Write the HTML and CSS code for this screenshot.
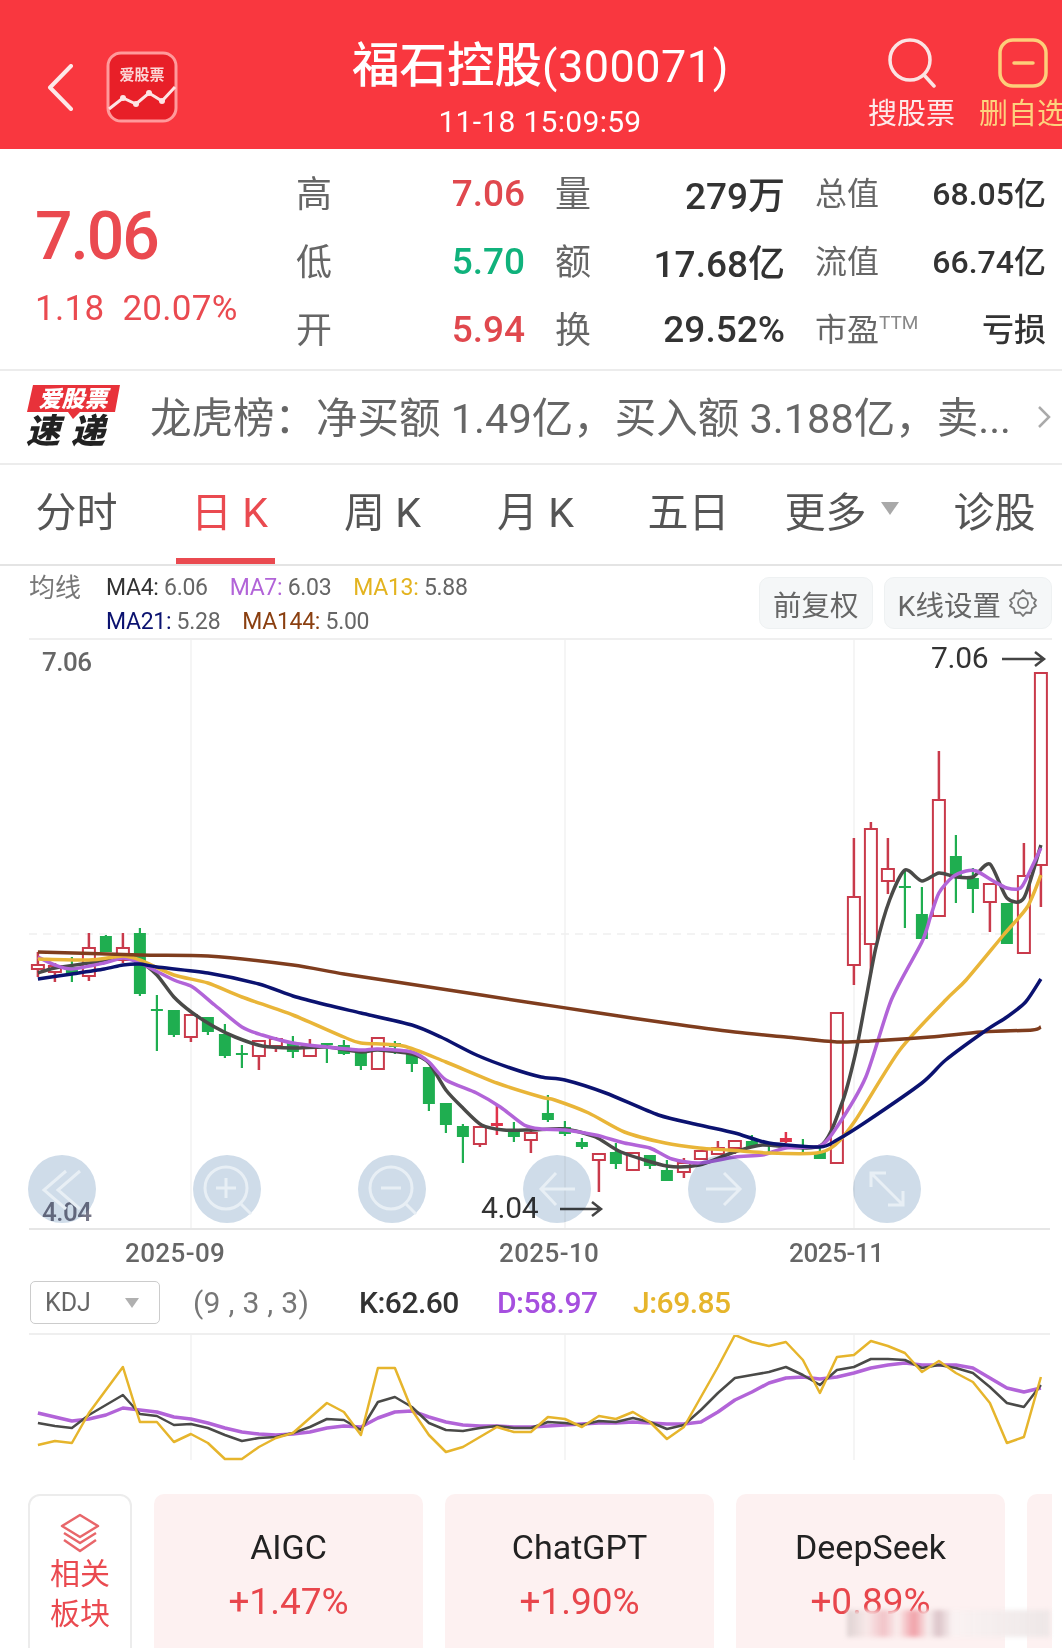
FILE: index.html
```html
<!DOCTYPE html>
<html lang="zh-CN">
<head>
  <meta charset="UTF-8">
  <meta name="viewport" content="width=device-width, initial-scale=1.0">
  <title>福石控股(300071)</title>
  <link rel="stylesheet" href="styles.css">
</head>
<body>
  <div class="page">

    <header class="header">
      <div class="headerLeft">
        <svg class="backIcon" width="27" height="47" viewBox="0 0 27 47"><path d="M24 2 L3 23.5 L24 45" /></svg>
        <svg class="appLogo" width="72" height="72" viewBox="0 0 72 72">
          <rect x="2" y="2" width="68" height="68" rx="13" class="appLogoBox" />
          <text x="36" y="29" class="appLogoText">爱股票</text>
          <polyline class="appLogoLine" points="3,58 17,47 30,53 43,42 56,50 69,36" />
          <circle cx="17" cy="47" r="3" /><circle cx="30" cy="53" r="3" /><circle cx="43" cy="42" r="3" /><circle cx="56" cy="50" r="3" />
        </svg>
      </div>
      <div class="headerTitle">
        <p class="stockName">福石控股<span class="stockCode">(300071)</span></p>
        <p class="stockTime">11-18 15:09:59</p>
      </div>
      <div class="headerActions">
        <div class="action">
          <svg width="52" height="50" viewBox="0 0 52 50"><circle cx="24" cy="22" r="20" class="searchStroke" /><path d="M38 37 L48 48" class="searchStroke" /></svg>
          <span>搜股票</span>
        </div>
        <div class="action actionGold">
          <svg width="52" height="50" viewBox="0 0 52 50"><rect x="3" y="2" width="46" height="46" rx="13" class="goldStroke" /><path d="M17 25 H36" class="goldStroke" /></svg>
          <span>删自选</span>
        </div>
      </div>
    </header>

    <section class="quote">
      <div class="quoteMain">
        <p class="lastPrice">7.06</p>
        <p class="change">1.18&nbsp; 20.07%</p>
      </div>
      <div class="quoteGrid">
        <span class="qLabel">高</span><span class="qValue up">7.06</span>
        <span class="qLabel">量</span><span class="qValue">279万</span>
        <span class="qSmall">总值</span><span class="qRight">68.05亿</span>

        <span class="qLabel">低</span><span class="qValue down">5.70</span>
        <span class="qLabel">额</span><span class="qValue">17.68亿</span>
        <span class="qSmall">流值</span><span class="qRight">66.74亿</span>

        <span class="qLabel">开</span><span class="qValue up">5.94</span>
        <span class="qLabel">换</span><span class="qValue">29.52%</span>
        <span class="qSmall">市盈<sup class="ttm">TTM</sup></span><span class="qRight">亏损</span>
      </div>
    </section>

    <section class="notice">
      <svg class="noticeLogo" width="96" height="68" viewBox="0 0 96 68">
        <path class="noticeFlag" d="M7 2 H94 L89 29 H54 L47 36 L42 29 H1 Z" />
        <text x="47" y="24" class="noticeFlagText">爱股票</text>
        <text x="0" y="60" class="noticeSpeed">速</text>
        <text x="45" y="60" class="noticeSpeed">递</text>
      </svg>
      <p class="noticeText">龙虎榜：净买额 1.49亿，买入额 3.188亿，卖...</p>
      <svg class="noticeArrow" width="14" height="24" viewBox="0 0 14 24"><path d="M2 2 L12 12 L2 22" /></svg>
    </section>

    <nav class="tabs">
      <div class="tab">分时</div>
      <div class="tab tabActive">日 K</div>
      <div class="tab">周 K</div>
      <div class="tab">月 K</div>
      <div class="tab">五日</div>
      <div class="tab">更多<span class="tabCaret"></span></div>
      <div class="tab">诊股</div>
    </nav>

    <section class="legend">
      <span class="legendTitle">均线</span>
      <div class="legendLines">
        <div class="legendLine">
          <span><b class="cMa4">MA4:</b> 6.06</span>
          <span><b class="cMa7">MA7:</b> 6.03</span>
          <span><b class="cMa13">MA13:</b> 5.88</span>
        </div>
        <div class="legendLine">
          <span><b class="cMa21">MA21:</b> 5.28</span>
          <span><b class="cMa144">MA144:</b> 5.00</span>
        </div>
      </div>
      <div class="legendButtons">
        <div class="chip">前复权</div>
        <div class="chip">K线设置
          <svg width="30" height="30" viewBox="0 0 30 30"><path class="gear" d="M15 2 L18 5.5 L23 5 L24 9.5 L28 12 L26 15 L28 18 L24 20.5 L23 25 L18 24.5 L15 28 L12 24.5 L7 25 L6 20.5 L2 18 L4 15 L2 12 L6 9.5 L7 5 L12 5.5 Z" /><circle class="gear" cx="15" cy="15" r="5" /></svg>
        </div>
      </div>
    </section>

    <section class="chartWrap">
      <svg id="kline" class="chart" width="1062" height="630" viewBox="0 640 1062 630">
        <line class="gridV" x1="191" y1="640" x2="191" y2="1229" />
        <line class="gridV" x1="565" y1="640" x2="565" y2="1229" />
        <line class="gridV" x1="854" y1="640" x2="854" y2="1229" />
        <line class="gridDash" x1="29" y1="934" x2="1050" y2="934" />
        <line class="axis" x1="29" y1="1229" x2="1050" y2="1229" />
        <g id="candles"></g>
        <g id="maLines"></g>
        <text x="42" y="671" class="scaleText">7.06</text>
        <text x="42" y="1221" class="scaleText scaleLow">4.04</text>
        <text x="931" y="668" class="markText">7.06</text>
        <path class="markArrow" d="M1002 659 H1044 M1035 652 L1044 659 L1035 666" />
        <text x="481" y="1218" class="markText">4.04</text>
        <path class="markArrow" d="M560 1209 H601 M592 1202 L601 1209 L592 1216" />
        <text x="125" y="1262" class="dateText">2025-09</text>
        <text x="499" y="1262" class="dateText">2025-10</text>
        <text x="789" y="1262" class="dateText dateTight">2025-11</text>
      </svg>
      <div class="chartTools">
        <div class="toolBtn"><svg width="68" height="68" viewBox="0 0 68 68"><path d="M38 16 L16 35 L38 54 M52 16 L30 35 L52 54" /></svg></div>
        <div class="toolBtn"><svg width="68" height="68" viewBox="0 0 68 68"><circle cx="33" cy="33" r="21" /><path d="M33 23 V43 M23 33 H43 M48 49 L58 59" /></svg></div>
        <div class="toolBtn"><svg width="68" height="68" viewBox="0 0 68 68"><circle cx="33" cy="33" r="21" /><path d="M23 33 H43 M48 49 L58 59" /></svg></div>
        <div class="toolBtn"><svg width="68" height="68" viewBox="0 0 68 68"><path d="M52 34 H18 M33 18 L18 34 L33 50" /></svg></div>
        <div class="toolBtn"><svg width="68" height="68" viewBox="0 0 68 68"><path d="M18 34 H52 M36 18 L52 34 L36 50" /></svg></div>
        <div class="toolBtn"><svg width="68" height="68" viewBox="0 0 68 68"><path d="M18 32 V18 H33 M18 18 L50 50 M50 36 V50 H35" /></svg></div>
      </div>
    </section>

    <section class="kdjBar">
      <div class="kdjSelect">KDJ<span class="kdjCaret"></span></div>
      <span class="kdjParams">(9 , 3 , 3)</span>
      <span class="kdjK">K:62.60</span>
      <span class="kdjD">D:58.97</span>
      <span class="kdjJ">J:69.85</span>
    </section>

    <section class="kdjChart">
      <svg id="kdj" class="chart" width="1062" height="159" viewBox="0 1335 1062 159">
        <line class="gridV" x1="191" y1="1335" x2="191" y2="1460" />
        <line class="gridV" x1="565" y1="1335" x2="565" y2="1460" />
        <line class="gridV" x1="854" y1="1335" x2="854" y2="1460" />
      </svg>
    </section>

    <section class="plates">
      <div class="plateHead">
        <svg width="42" height="40" viewBox="0 0 42 40">
          <path class="plateIcon" d="M21 2 L39 13 L21 24 L3 13 Z M5 20 L21 30 L37 20 M5 27 L21 38 L37 27" />
        </svg>
        <span>相关</span>
        <span>板块</span>
      </div>
      <div class="plate"><p class="plateName">AIGC</p><p class="plateRate">+1.47%</p></div>
      <div class="plate"><p class="plateName">ChatGPT</p><p class="plateRate">+1.90%</p></div>
      <div class="plate"><p class="plateName">DeepSeek</p><p class="plateRate">+0.89%</p></div>
      <div class="plate"></div>
    </section>

    <div class="watermark"></div>
  </div>

  <script src="chart.js"></script>
</body>
</html>
```

FILE: styles.css
```css
body, html {
  margin: 0;
  background-color: white;
}
p {
  margin: 0;
}
.page {
  position: relative;
  width: 1062px;
  height: 1648px;
  overflow: hidden;
  font-family: Roboto, "Noto Sans CJK SC", sans-serif;
  color: #333;
}

/* red header */
.header {
  display: grid;
  grid-template-columns: 352px 376px 1fr;
  height: 149px;
  background-color: #f9373f;
  color: white;
}
.headerLeft {
  display: flex;
  align-items: center;
  gap: 32px;
  padding: 0 0 0 47px;
  height: 174px;
}
.backIcon path {
  fill: none;
  stroke: #fde8e8;
  stroke-width: 4;
  stroke-linecap: round;
  stroke-linejoin: round;
}
.appLogoBox {
  fill: #e81f28;
  stroke: #ff9a9b;
  stroke-width: 3;
}
.appLogoText {
  font-size: 15px;
  font-weight: 700;
  fill: #fbd5d5;
  text-anchor: middle;
}
.appLogoLine {
  fill: none;
  stroke: #fde4e4;
  stroke-width: 3;
}
.appLogo circle {
  fill: #fde4e4;
}
.headerTitle {
  text-align: center;
  white-space: nowrap;
}
.stockName {
  margin-top: 38px;
  font-size: 47.5px;
  line-height: 56px;
  font-weight: 500;
}
.stockCode {
  font-size: 45px;
  letter-spacing: 0.5px;
  font-weight: 400;
}
.stockTime {
  margin-top: 9px;
  font-size: 30px;
  line-height: 36px;
  letter-spacing: 0.3px;
}
.headerActions {
  display: flex;
  gap: 24px;
  padding: 38px 0 0 140px;
}
.action {
  display: flex;
  flex-direction: column;
  align-items: center;
  width: 87px;
  flex-shrink: 0;
  white-space: nowrap;
  font-size: 29px;
  line-height: 36px;
  color: #fdeaea;
}
.action svg {
  margin-bottom: 8px;
}
.actionGold {
  color: #fdd27e;
}
.searchStroke {
  fill: none;
  stroke: #fbe3e3;
  stroke-width: 3.5;
  stroke-linecap: round;
}
.goldStroke {
  fill: none;
  stroke: #fdce7a;
  stroke-width: 3.5;
  stroke-linecap: round;
}

/* price block */
.quote {
  display: flex;
  height: 222px;
  border-bottom: 2px solid #ececec;
  box-sizing: border-box;
}
.quoteMain {
  width: 298px;
  padding: 51px 0 0 35px;
  box-sizing: border-box;
  color: #ea4a50;
  white-space: nowrap;
}
.lastPrice {
  font-size: 66px;
  line-height: 74px;
  font-weight: 500;
  letter-spacing: -2px;
}
.change {
  margin-top: 15px;
  font-size: 35px;
  line-height: 40px;
  letter-spacing: 0.3px;
}
.quoteGrid {
  display: grid;
  grid-template-columns: 34px 161px 36px 160px 60px 137px;
  grid-auto-rows: 68px;
  column-gap: 32px;
  align-items: center;
  padding-top: 10px;
  white-space: nowrap;
}
.qLabel {
  margin: 0 0 4px -2px;
  font-size: 36px;
  color: #666;
}
.qValue {
  font-size: 37px;
  text-align: right;
  font-weight: 500;
}
.qSmall {
  margin: 0 0 5px -2px;
  font-size: 32px;
  color: #666;
}
.qRight {
  margin-bottom: 4px;
  font-size: 32px;
  text-align: right;
  font-weight: 500;
}
.ttm {
  font-size: 19px;
  color: #888;
  vertical-align: 12px;
  line-height: 0;
}
.up {
  color: #e0484e;
}
.down {
  color: #10b27c;
}

/* notice */
.notice {
  display: flex;
  align-items: center;
  height: 94px;
  padding-left: 26px;
  border-bottom: 2px solid #ececec;
  box-sizing: border-box;
}
.noticeFlag {
  fill: #e8323a;
}
.noticeFlagText {
  font-size: 23px;
  font-weight: 900;
  font-style: italic;
  fill: white;
  text-anchor: middle;
}
.noticeSpeed {
  font-size: 34px;
  font-weight: 900;
  font-style: italic;
  fill: #222;
}
.noticeText {
  flex-shrink: 0;
  margin: 4px 0 0 28px;
  width: 887px;
  font-size: 41.5px;
  line-height: 56px;
  color: #666;
  white-space: nowrap;
}
.noticeArrow path {
  fill: none;
  stroke: #aaa;
  stroke-width: 2.5;
}

/* period tabs */
.tabs {
  display: grid;
  grid-template-columns: repeat(7, 153px);
  height: 101px;
  border-bottom: 2px solid #e4e4e4;
  box-sizing: border-box;
  font-size: 41px;
  color: #555;
}
.tab {
  display: flex;
  align-items: center;
  justify-content: center;
  padding-bottom: 12px;
  white-space: pre;
}
.tabActive {
  color: #ea4a50;
  position: relative;
}
.tabActive::after {
  content: "";
  position: absolute;
  left: 23px;
  bottom: 0;
  width: 99px;
  height: 6px;
  background-color: #ea4a50;
}
.tabCaret {
  margin-left: 14px;
  border-left: 9px solid transparent;
  border-right: 9px solid transparent;
  border-top: 13px solid #a9a9a9;
}

/* MA legend */
.legend {
  display: flex;
  height: 74px;
  margin: 0 10px 0 29px;
  border-bottom: 2px solid #efefef;
  box-sizing: border-box;
  color: #666;
  font-size: 23px;
}
.legendTitle {
  width: 77px;
  padding-top: 5px;
  font-size: 26px;
  line-height: 34px;
  color: #777;
}
.legendLines {
  flex: 1;
  padding-top: 5px;
}
.legendLine {
  display: flex;
  gap: 22px;
  height: 34px;
  line-height: 34px;
  letter-spacing: -0.3px;
}
.legendLine b {
  font-weight: 400;
}
.cMa4 { color: #333; }
.cMa7 { color: #b264d8; }
.cMa13 { color: #e3b31f; }
.cMa21 { color: #0b1270; }
.cMa144 { color: #8a3f10; }
.legendButtons {
  display: flex;
  gap: 11px;
  padding-top: 11px;
}
.chip {
  display: flex;
  align-items: center;
  gap: 7px;
  height: 50px;
  padding: 0 13px;
  border: 1px solid #eef1f2;
  border-radius: 10px;
  background-color: #f5f7f8;
  font-size: 28.5px;
  color: #666;
}
.gear {
  fill: none;
  stroke: #777;
  stroke-width: 1.8;
  stroke-linejoin: round;
}

/* charts */
.chartWrap {
  position: relative;
  height: 630px;
}
.chart {
  display: block;
}
.gridV {
  stroke: #f2f2f2;
  stroke-width: 1.5;
}
.gridDash {
  stroke: #efefef;
  stroke-width: 1.5;
  stroke-dasharray: 8 6;
}
.axis {
  stroke: #e6e6e6;
  stroke-width: 2;
}
.scaleText {
  font-size: 26px;
  font-weight: 500;
  fill: #666;
  letter-spacing: -0.5px;
}
.scaleLow {
  fill: #778;
}
.markText {
  font-size: 30px;
  fill: #333;
  letter-spacing: -0.3px;
}
.markArrow {
  fill: none;
  stroke: #444;
  stroke-width: 2.5;
}
.dateText {
  font-size: 26px;
  font-weight: 500;
  fill: #666;
  letter-spacing: 0.4px;
}
.dateTight {
  letter-spacing: -0.4px;
}
.chartTools {
  position: absolute;
  left: 28px;
  top: 515px;
  display: flex;
  gap: 97px;
}
.toolBtn {
  position: relative;
  width: 68px;
  height: 68px;
}
/* multiply keeps the candles and labels under the button readable */
.toolBtn::before {
  content: "";
  position: absolute;
  inset: 0;
  border-radius: 50%;
  background-color: #cfdce9;
  mix-blend-mode: multiply;
}
.toolBtn svg {
  display: block;
  position: relative;
}
.toolBtn path, .toolBtn circle {
  fill: none;
  stroke: #e8eff5;
  stroke-width: 3;
}

/* KDJ */
.kdjBar {
  display: flex;
  align-items: center;
  height: 65px;
  padding-top: 1px;
  margin: 0 12px 0 29px;
  border-bottom: 2px solid #efefef;
  box-sizing: border-box;
  font-size: 30px;
  font-weight: 500;
  white-space: nowrap;
}
.kdjSelect {
  display: flex;
  align-items: center;
  justify-content: space-between;
  width: 130px;
  height: 43px;
  padding: 1px 20px 0 14px;
  margin: 0 33px 0 1px;
  border: 1px solid #ccc;
  border-radius: 5px;
  box-sizing: border-box;
  font-size: 25px;
  font-weight: 400;
  color: #666;
}
.kdjCaret {
  border-left: 7px solid transparent;
  border-right: 7px solid transparent;
  border-top: 10px solid #b0b0b0;
}
.kdjParams {
  width: 166px;
  font-weight: 400;
  color: #777;
  letter-spacing: 0.3px;
}
.kdjK {
  width: 138px;
  color: #333;
  letter-spacing: -0.5px;
}
.kdjD {
  width: 136px;
  color: #a64fdf;
  letter-spacing: -0.5px;
}
.kdjJ {
  color: #e6b52c;
  letter-spacing: -0.5px;
}
.kdjChart {
  height: 159px;
}

/* related sectors */
.plates {
  display: flex;
  gap: 22px;
  margin-left: 28px;
  width: 1024px;
  overflow: hidden;
}
.plateHead {
  display: flex;
  flex-direction: column;
  align-items: center;
  flex-shrink: 0;
  width: 104px;
  height: 190px;
  padding-top: 17px;
  border: 2px solid #ececec;
  border-radius: 12px;
  box-sizing: border-box;
  font-size: 30px;
  line-height: 40px;
  color: #ea4a50;
}
.plateHead svg {
  margin-bottom: 1px;
}
.plateIcon {
  fill: none;
  stroke: #e8666a;
  stroke-width: 2.5;
  stroke-linejoin: round;
}
.plate {
  flex-shrink: 0;
  width: 269px;
  height: 190px;
  border-radius: 10px;
  background-color: #fdf1f1;
  text-align: center;
}
.plateName {
  margin-top: 31px;
  font-size: 34px;
  line-height: 44px;
  color: #222;
}
.plateRate {
  margin-top: 11px;
  font-size: 37px;
  line-height: 44px;
  color: #e8464c;
}

/* blurred site mark sitting over the bottom corner */
.watermark {
  position: absolute;
  left: 847px;
  top: 1610px;
  width: 203px;
  height: 27px;
  background: linear-gradient(90deg, rgba(220,208,208,0.92) 0%, rgba(248,232,232,0.95) 10%, rgba(240,190,195,0.9) 18%, rgba(250,238,238,0.95) 25%, rgba(238,150,158,0.9) 33%, rgba(248,238,238,0.95) 40%, rgba(215,190,195,0.9) 45%, rgba(250,242,242,0.95) 52%, rgba(236,230,230,0.92) 100%);
  filter: blur(2px);
}
```

FILE: chart.js
```js
// all chart data is in page pixels so it lines up with the svg viewBox
const X0 = 37.9;
const STEP = 17;
const NS = 'http://www.w3.org/2000/svg';

// kind, high, body top, body bottom, low
const candles = [
  ['r',952,965,969,977],['r',963,966,972,982],['g',957,967,975,982],['r',933,948,976,981],
  ['g',935,936,952,952],['r',933,948,960,963],['g',928,933,994,996],['g',995,1009,1011,1051],
  ['g',1010,1010,1035,1037],['r',1015,1015,1037,1042],['g',1017,1017,1032,1035],['g',1024,1034,1056,1058],
  ['g',1045,1053,1055,1068],['r',1041,1041,1056,1070],['r',1037,1039,1046,1052],['g',1036,1043,1052,1058],
  ['r',1039,1046,1056,1057],['g',1043,1043,1045,1063],['g',1040,1045,1054,1055],['g',1052,1053,1066,1070],
  ['r',1037,1038,1069,1069],['g',1041,1043,1047,1054],['g',1053,1053,1064,1072],['g',1067,1067,1104,1111],
  ['g',1103,1103,1125,1133],['g',1124,1126,1137,1163],['r',1127,1127,1144,1147],['d',1105,1123,1126,1135],
  ['g',1122,1130,1137,1142],['r',1128,1133,1140,1153],['g',1095,1113,1120,1122],['g',1121,1127,1134,1136],
  ['g',1138,1142,1147,1149],['r',1154,1154,1160,1192],['g',1143,1152,1164,1169],['r',1153,1153,1170,1170],
  ['g',1155,1155,1166,1169],['g',1160,1170,1181,1181],['r',1158,1163,1172,1178],['r',1151,1151,1159,1160],
  ['r',1141,1148,1154,1154],['r',1140,1141,1148,1154],['g',1135,1141,1147,1148],['g',1142,1143,1145,1152],
  ['d',1132,1138,1142,1143],['g',1139,1145,1149,1153],['g',1148,1152,1159,1159],['r',1013,1013,1163,1163],
  ['r',838,897,965,985],['r',822,829,944,973],['r',838,869,881,894],['g',870,886,887,928],
  ['g',887,914,939,939],['r',751,800,916,916],['g',835,856,878,903],['g',868,878,889,913],
  ['r',884,884,902,932],['g',903,903,944,944],['r',843,876,953,953],['r',673,673,865,907]
];

// moving averages as [candle index, y]
const maLines = [
  { color: '#4a4a48', points: [[0,973],[1,968],[3,963],[5,957],[6,962],[7,975],[8,997],[9.1,1013],[10.4,1027],[11.6,1037],[13.2,1046],[15,1048],[17,1047],[19,1052],[20,1050],[22,1054],[23,1063],[24,1090],[25,1108],[26.1,1125],[27.4,1130],[29,1130],[31,1129],[32.8,1137],[34.3,1152],[37,1166],[38.9,1165],[40.8,1153],[42.6,1145],[46,1146],[47.3,1103],[48.1,1053],[48.7,1000],[49.3,947],[50.1,900],[51,870],[52,881],[53,873],[54,877],[55,877],[56,864],[57,898],[58,898],[59,845]] },
  { color: '#b264d8', points: [[0,957],[1,965],[2,969],[3.9,963],[5,958],[6,963],[8,980],[9.1,987],[10.4,1005],[12,1027],[13.2,1035],[15,1043],[17,1047],[19,1050],[20,1049],[22,1052],[23,1062],[24,1080],[25.8,1093],[27.2,1107],[28.6,1125],[29.6,1129],[31,1130],[32.8,1135],[34.5,1143],[36,1148],[37.3,1159],[38.9,1163],[41,1157],[42.6,1155],[44,1148],[46,1146],[47,1127],[48.7,1077],[50.2,1000],[52,942],[52.5,917],[53,893],[53.8,877],[54.6,871],[55.2,871],[56.2,881],[57,888],[57.8,888],[58.3,873],[59,848]] },
  { color: '#e9b538', points: [[0,959],[3,960],[5,956],[6,960],[8,975],[10,983],[12,997],[15,1015],[18,1037],[19,1043],[21.5,1046],[24,1062],[27,1083],[29.6,1097],[30.4,1100],[32.4,1113],[34.5,1132],[36.9,1143],[38.9,1148],[40.6,1150],[43,1153],[45.8,1153],[46.9,1145],[48.1,1120],[50.7,1050],[53.4,1000],[54.6,980],[56.8,935],[58.2,907],[59,875]] },
  { color: '#7f3d1e', points: [[0,952],[6,955],[10,956],[15,965],[18,974],[23,987],[29.5,1004],[33,1013],[37,1023],[41,1032],[44,1037],[47,1042],[49,1041],[52.5,1037],[55.5,1032],[58.5,1030],[59,1027]] },
  { color: '#0b1270', points: [[0,979],[2,974],[3.9,969],[5,965],[6,964],[7,967],[10,973],[13,984],[15,996],[17,1005],[19,1013],[22,1025],[23.7,1037],[25.8,1055],[27.8,1068],[29.6,1077],[31,1080],[33.4,1093],[36.5,1115],[38.9,1125],[41,1133],[43,1143],[46,1147],[47,1140],[48.7,1122],[52,1083],[53.4,1060],[55.8,1030],[57,1017],[58.1,1002],[59,979]] }
];

const kdj = [
  { color: '#b264d8', width: 3.5, values: [1413,1417,1421,1419,1415,1408,1410,1412,1417,1419,1423,1428,1432,1434,1435,1434,1432,1428,1426,1427,1418,1412,1411,1417,1422,1425,1426,1426,1427,1427,1426,1425,1424,1423,1423,1422,1423,1424,1424,1422,1412,1400,1392,1383,1378,1377,1379,1377,1373,1368,1365,1363,1365,1365,1365,1368,1378,1388,1392,1388] },
  { color: '#4a4a48', width: 2.5, values: [1423,1426,1428,1415,1405,1395,1414,1416,1425,1424,1428,1435,1441,1438,1437,1433,1427,1419,1420,1430,1402,1397,1407,1423,1430,1431,1428,1426,1428,1428,1422,1423,1425,1421,1422,1418,1422,1429,1425,1410,1393,1378,1375,1372,1367,1375,1385,1370,1367,1359,1359,1360,1368,1365,1368,1373,1387,1403,1407,1385] },
  { color: '#e6b52c', width: 2.5, values: [1445,1441,1443,1413,1390,1367,1422,1422,1442,1434,1443,1459,1459,1447,1438,1433,1418,1403,1412,1435,1368,1368,1410,1435,1452,1447,1437,1427,1432,1432,1417,1419,1427,1416,1419,1412,1422,1439,1427,1397,1367,1335,1342,1346,1342,1360,1393,1357,1355,1341,1346,1353,1372,1361,1373,1382,1403,1443,1437,1377] }
];

function px(i) {
  return X0 + STEP * i;
}

function add(parent, tag, attrs) {
  const el = document.createElementNS(NS, tag);
  for (const key in attrs) el.setAttribute(key, attrs[key]);
  parent.appendChild(el);
  return el;
}

function drawCandles() {
  const group = document.getElementById('candles');
  candles.forEach(([kind, high, top, bottom, low], i) => {
    const x = px(i);
    const color = kind === 'g' ? '#1fae50' : (kind === 'd' ? '#e0334a' : '#c93a4b');
    const wick = kind === 'g' ? 2.2 : 2.5;
    if (high < top) add(group, 'line', { x1: x, y1: high, x2: x, y2: top, stroke: color, 'stroke-width': wick });
    if (low > bottom) add(group, 'line', { x1: x, y1: bottom, x2: x, y2: low, stroke: color, 'stroke-width': wick });
    const hollow = kind === 'r';
    add(group, 'rect', {
      x: x - 6, y: top, width: 12, height: Math.max(bottom - top, 2),
      fill: hollow ? 'white' : color,
      stroke: hollow ? color : 'none',
      'stroke-width': 2
    });
  });
}

// catmull-rom through the points, keeps the averages from looking faceted
function smoothPath(pts) {
  let d = `M${pts[0][0]} ${pts[0][1]}`;
  for (let i = 0; i < pts.length - 1; i++) {
    const p0 = pts[i - 1] || pts[i];
    const p1 = pts[i];
    const p2 = pts[i + 1];
    const p3 = pts[i + 2] || p2;
    const c1x = p1[0] + (p2[0] - p0[0]) / 8;
    const c1y = p1[1] + (p2[1] - p0[1]) / 8;
    const c2x = p2[0] - (p3[0] - p1[0]) / 8;
    const c2y = p2[1] - (p3[1] - p1[1]) / 8;
    d += ` C${c1x} ${c1y} ${c2x} ${c2y} ${p2[0]} ${p2[1]}`;
  }
  return d;
}

function drawMa() {
  const group = document.getElementById('maLines');
  maLines.forEach(line => {
    const pts = line.points.map(([i, y]) => [px(i), y]);
    add(group, 'path', { d: smoothPath(pts), fill: 'none', stroke: line.color, 'stroke-width': 3.5, 'stroke-linejoin': 'round' });
  });
}

function drawKdj() {
  const svg = document.getElementById('kdj');
  kdj.forEach(line => {
    const points = line.values.map((y, i) => `${px(i)},${y}`).join(' ');
    add(svg, 'polyline', { points, fill: 'none', stroke: line.color, 'stroke-width': line.width, 'stroke-linejoin': 'round' });
  });
}

drawCandles();
drawMa();
drawKdj();
```
